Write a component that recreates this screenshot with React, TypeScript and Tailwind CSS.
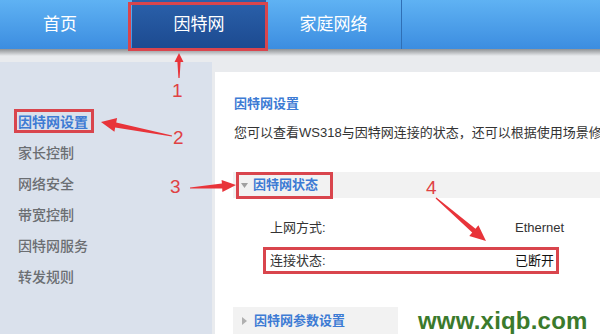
import React from 'react';

const FONT = '"Liberation Sans", "Noto Sans CJK SC", sans-serif';

type Pt = [number, number];

// tapered annotation arrow from tail to tip
function arrowPoints(tail: Pt, tip: Pt, headLen: number, headHalf: number, shaftHalf: number): string {
  const dx = tip[0] - tail[0];
  const dy = tip[1] - tail[1];
  const len = Math.hypot(dx, dy);
  const ux = dx / len;
  const uy = dy / len;
  const nx = -uy;
  const ny = ux;
  const bx = tip[0] - ux * headLen;
  const by = tip[1] - uy * headLen;
  const pts: Pt[] = [
    [tail[0] + nx * 0.6, tail[1] + ny * 0.6],
    [bx + nx * shaftHalf, by + ny * shaftHalf],
    [bx + nx * headHalf, by + ny * headHalf],
    tip,
    [bx - nx * headHalf, by - ny * headHalf],
    [bx - nx * shaftHalf, by - ny * shaftHalf],
    [tail[0] - nx * 0.6, tail[1] - ny * 0.6],
  ];
  return pts.map((p) => `${p[0].toFixed(1)},${p[1].toFixed(1)}`).join(' ');
}

const sideItems = ['因特网设置', '家长控制', '网络安全', '带宽控制', '因特网服务', '转发规则'];

const DownTri = () => (
  <svg width="7" height="5" viewBox="0 0 7 5" className="mr-[5px]">
    <polygon points="0,0 7,0 3.5,5" fill="#a0a0a0" />
  </svg>
);

const RightTri = () => (
  <svg width="5" height="8" viewBox="0 0 5 8" className="mr-[7px] ml-[1px]">
    <polygon points="0,0 5,4 0,8" fill="#b0b0b0" />
  </svg>
);

export default function App() {
  return (
    <div className="relative w-[600px] h-[334px] overflow-hidden bg-[#e9ebee]" style={{ fontFamily: FONT }}>
      {/* top nav */}
      <div className="flex h-[49px] bg-gradient-to-b from-[#5fb2f3] to-[#3c8de0] text-white text-[17px]">
        <div className="w-[132px] shrink-0 flex items-center justify-center pr-[12px]">首页</div>
        <div className="w-[134px] shrink-0 flex items-center justify-center bg-gradient-to-b from-[#2b61ab] to-[#1c4a90]">因特网</div>
        <div className="w-[136px] shrink-0 flex items-center justify-center border-r border-[#2f6fb5]">家庭网络</div>
        <div className="flex-1" />
      </div>
      <div className="h-[7px] bg-gradient-to-b from-[#8f9295] to-[#e9ebee]" />

      <div className="flex h-[278px]">
        {/* sidebar */}
        <div className="w-[212px] shrink-0 mt-[6px] bg-[#dae1ec] pt-[45px]">
          {sideItems.map((s, i) => (
            <div
              key={s}
              className={`h-[31px] flex items-center pl-[18px] text-[14px] ${
                i === 0 ? 'text-[#3d7bd4] font-bold' : 'text-[#6b6e72] font-medium'
              }`}
            >
              {s}
            </div>
          ))}
        </div>

        {/* main panel */}
        <div className="flex-1 min-w-0 overflow-hidden ml-[3px] mt-[16px] bg-white">
          <div className="pl-[19px] mt-[22px] h-[20px] flex items-center text-[13px] font-bold text-[#3d7bd4]">因特网设置</div>
          <div className="pl-[19px] mt-[9px] h-[20px] flex items-center text-[13px] text-[#333] whitespace-nowrap">
            您可以查看WS318与因特网连接的状态，还可以根据使用场景修改
          </div>

          <div className="ml-[18px] mt-[29px] h-[26px] bg-[#f2f2f2] flex items-center pl-[8px] text-[13px] font-bold text-[#3d7bd4]">
            <DownTri />
            因特网状态
          </div>

          <div className="mt-[17px] flex flex-col gap-[7px] text-[13px] text-[#333]">
            <div className="h-[26px] flex items-center pl-[55px]">
              <span className="w-[245px]">上网方式:</span>
              <span>Ethernet</span>
            </div>
            <div className="h-[26px] flex items-center pl-[55px]">
              <span className="w-[245px]">连接状态:</span>
              <span className="text-[#111]">已断开</span>
            </div>
          </div>

          <div className="ml-[18px] mt-[33px] h-[27px] bg-[#f2f2f2] flex items-center pl-[8px] text-[13px] font-bold text-[#3d7bd4]">
            <RightTri />
            因特网参数设置
          </div>
        </div>
      </div>

      {/* watermark */}
      <div className="absolute left-[398px] top-[307px] w-[202px] h-[27px] bg-white flex items-center pl-[20px]">
        <span className="text-[24px] font-bold text-[#3b7a2c] leading-none tracking-[0.2px]" style={{ fontFamily: '"Liberation Sans", sans-serif' }}>
          www.xiqb.com
        </span>
      </div>

      {/* annotation boxes */}
      <div className="absolute left-[128px] top-[2px] w-[140px] h-[49px] border-[3px] border-[#d9454d]" />
      <div className="absolute left-[14px] top-[109px] w-[80px] h-[24px] border-[3px] border-[#d9454d]" />
      <div className="absolute left-[236px] top-[172px] w-[97px] h-[27px] border-[3px] border-[#d9454d]" />
      <div className="absolute left-[263px] top-[247px] w-[296px] h-[27px] border-[3px] border-[#d9454d]" />

      {/* annotation numbers */}
      <div className="absolute left-[172px] top-[81px] text-[19px] text-[#e04143] leading-none">1</div>
      <div className="absolute left-[173px] top-[128px] text-[19px] text-[#e04143] leading-none">2</div>
      <div className="absolute left-[170px] top-[177px] text-[19px] text-[#e04143] leading-none">3</div>
      <div className="absolute left-[426px] top-[178px] text-[19px] text-[#e04143] leading-none">4</div>

      {/* arrows */}
      <svg className="absolute left-0 top-0" width="600" height="334" viewBox="0 0 600 334">
        <polygon points={arrowPoints([179, 78], [179, 53], 9, 4.5, 1.6)} fill="#e8343a" />
        <polygon points={arrowPoints([172, 136], [101, 122], 15, 7, 2.5)} fill="#e8343a" />
        <polygon points={arrowPoints([190, 188], [236, 185], 14, 6, 2.5)} fill="#e8343a" />
        <polygon points={arrowPoints([436, 198], [486, 241], 16, 7, 2.5)} fill="#e8343a" />
      </svg>
    </div>
  );
}
